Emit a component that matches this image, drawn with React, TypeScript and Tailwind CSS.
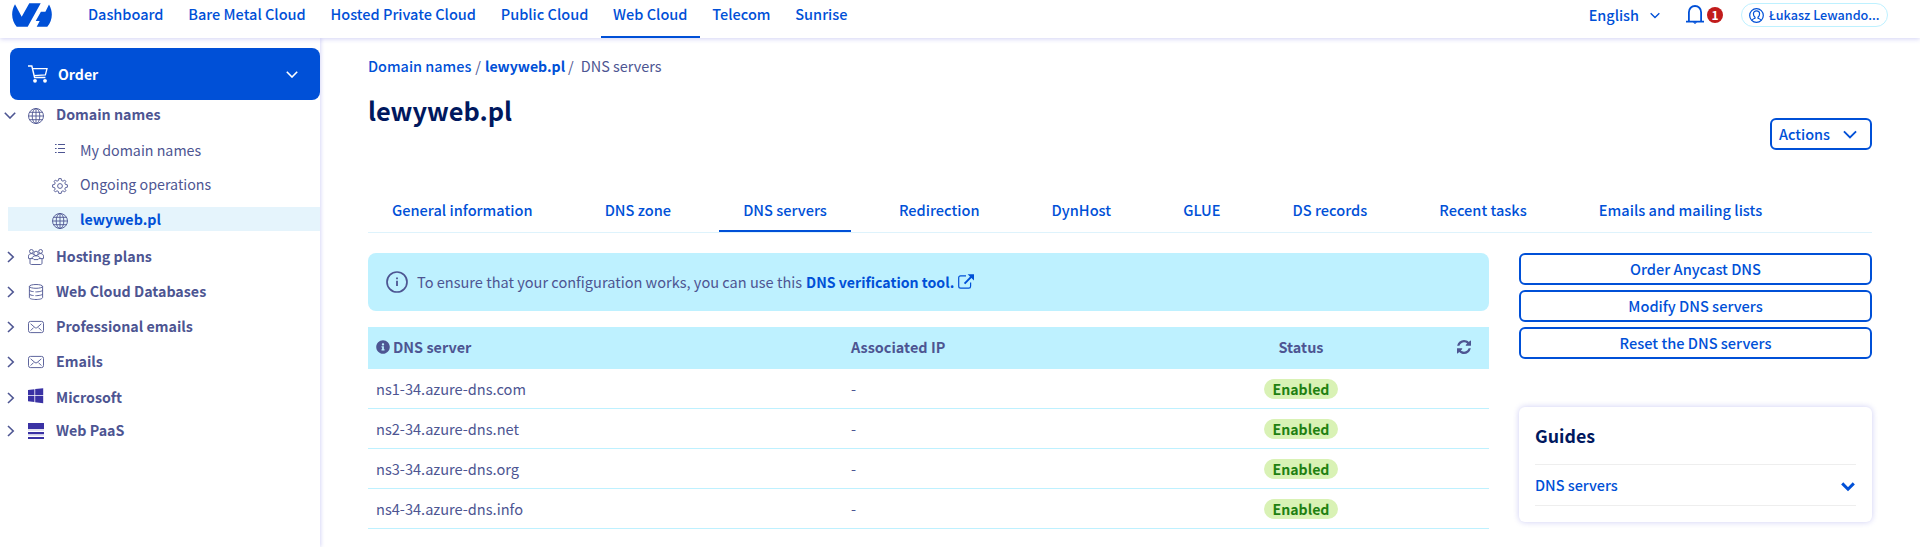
import type { ReactNode } from "react";
import { FaInfoCircle } from "react-icons/fa";

type IconProps = { className?: string };

function Chevron({ className = "" }: IconProps) {
  return (
    <svg viewBox="0 0 12 7" fill="none" stroke="currentColor" className={className}>
      <path d="M0.8 0.8 6 6 11.2 0.8" strokeWidth="1.6" />
    </svg>
  );
}

function ChevronRight() {
  return (
    <svg viewBox="0 0 8 12" fill="none" stroke="currentColor" className="h-3 w-2">
      <path d="M1 1 6.2 6 1 11" strokeWidth="1.6" />
    </svg>
  );
}

function Logo() {
  return (
    <svg viewBox="0 0 40 24" className="h-6 w-10 shrink-0" fill="#0050d7">
      <path d="M3 1.2 9.7 13.7 17.3.3H28.7L15.7 23.7H4.7C-.6 17.6-1.4 8.6 3 1.2Z" />
      <path d="M37 1.4C41.3 8.6 40.7 17.6 35.3 23.7H24.7L27.7 18H23.7L28.9 8.7H33.4Z" />
    </svg>
  );
}

function Cart() {
  return (
    <svg viewBox="0 0 20 18" fill="none" stroke="white" className="h-[18px] w-5">
      <path d="M0 .9H3.8L6.6 12.6H17.4" strokeWidth="1.5" />
      <path d="M4.6 3.6H19L17.4 9.8 6 10.6" strokeWidth="1.3" />
      <circle cx="7" cy="15.8" r="1.9" fill="white" stroke="none" />
      <circle cx="17" cy="15.8" r="1.9" fill="white" stroke="none" />
    </svg>
  );
}

function Globe() {
  return (
    <svg viewBox="0 0 16 16" fill="none" stroke="currentColor" strokeWidth="0.9" className="size-4">
      <circle cx="8" cy="8" r="7.5" />
      <ellipse cx="8" cy="8" rx="3.8" ry="7.5" />
      <path d="M8 .5V15.5M.5 8H15.5M1.6 4.3H14.4M1.6 11.7H14.4" />
    </svg>
  );
}

function ListIcon() {
  return (
    <svg viewBox="0 0 16 16" stroke="currentColor" strokeWidth="1.2" className="size-4">
      <path d="M3 3.5H4.6M3 7.5H4.6M3 11.5H4.6M6 3.5H13M6 7.5H13M6 11.5H13" />
    </svg>
  );
}

function Gear() {
  return (
    <svg viewBox="0 0 16 16" fill="none" stroke="currentColor" strokeWidth="0.9" strokeLinejoin="round" className="size-4">
      <path d="M6.8.6H9.2L9.6 2.6 11 3.2 12.7 2.1 13.9 3.3 12.8 5 13.4 6.4 15.4 6.8V9.2L13.4 9.6 12.8 11 13.9 12.7 12.7 13.9 11 12.8 9.6 13.4 9.2 15.4H6.8L6.4 13.4 5 12.8 3.3 13.9 2.1 12.7 3.2 11 2.6 9.6.6 9.2V6.8L2.6 6.4 3.2 5 2.1 3.3 3.3 2.1 5 3.2 6.4 2.6Z" />
      <circle cx="8" cy="8" r="2.4" />
    </svg>
  );
}

function Hosting() {
  return (
    <svg viewBox="0 0 16 16" fill="none" stroke="currentColor" strokeWidth="0.9" className="size-4">
      <circle cx="3.4" cy="2.4" r="1.9" />
      <circle cx="12.6" cy="2.4" r="1.9" />
      <circle cx="8" cy="4.4" r="2.2" />
      <path d="M.5 9.4V7.2C.5 5.6 1.8 4.6 3.6 4.6 4.6 4.6 5.4 5 5.8 5.6M15.5 9.4V7.2C15.5 5.6 14.2 4.6 12.4 4.6 11.4 4.6 10.6 5 10.2 5.6M4 9.4C4 7.8 5.6 6.8 8 6.8S12 7.8 12 9.4M.5 9.6H5.2L6 10.6H10L10.8 9.6H15.5M2 9.8V14C2 15 2.6 15.5 3.4 15.5H12.6C13.4 15.5 14 15 14 14V9.8" />
    </svg>
  );
}

function Database() {
  return (
    <svg viewBox="0 0 16 16" fill="none" stroke="currentColor" strokeWidth="0.9" className="size-4">
      <ellipse cx="8" cy="2.4" rx="6.6" ry="1.9" />
      <path d="M1.4 2.4V13.6C1.4 14.7 4.3 15.5 8 15.5S14.6 14.7 14.6 13.6V2.4M1.4 6.2C1.6 7 4 7.6 5.6 7.6M7.4 7.9C11 7.9 14.4 7.2 14.6 6.2M1.4 10C1.6 10.9 4 11.5 5.6 11.5M7.4 11.7C11 11.7 14.4 11 14.6 10" />
    </svg>
  );
}

function Mail() {
  return (
    <svg viewBox="0 0 16 16" fill="none" stroke="currentColor" strokeWidth="0.9" className="size-4">
      <rect x=".5" y="2.4" width="15" height="11.2" rx="2" />
      <path d="M2.6 4.8 7 8.6C7.6 9.1 8.4 9.1 9 8.6L13.4 4.8M2.6 11.6 5.6 8.6M13.4 11.6 10.4 8.6" />
    </svg>
  );
}

function Windows() {
  return (
    <svg viewBox="0 0 16 16" fill="#3a32a4" className="mb-[5px] size-4">
      <path d="M0 2 6.4 1.2V7.2H0ZM7.2 1.1 15.2.3V7.2H7.2ZM0 8H6.4V14L0 13.2ZM7.2 8H15.2V15.2L7.2 14.2Z" />
    </svg>
  );
}

function Paas() {
  return (
    <svg viewBox="0 0 16 16" className="size-4">
      <path d="M0 0H16V6H0ZM0 9H16V11.2H0ZM0 14H16V16H0Z" fill="#3a32a4" />
      <path d="M0 6.4H16V7.4H0ZM0 12.4H16V13H0Z" fill="#c5c3e4" />
    </svg>
  );
}

function Bell() {
  return (
    <svg viewBox="0 0 18 19" fill="none" stroke="#0050d7" strokeWidth="1.8" className="h-[19px] w-[18px]">
      <path d="M0 16.6H18M2.9 16.4V7.2C2.9 3.6 5.6 1 9 1S15.1 3.6 15.1 7.2V16.4" />
      <path d="M6.8 17.2 9 19 11.2 17.2Z" fill="#0050d7" stroke="none" />
    </svg>
  );
}

function UserIcon() {
  return (
    <svg viewBox="0 0 15 15" fill="none" stroke="#0050d7" strokeWidth="1.2" className="size-[15px] shrink-0">
      <circle cx="7.5" cy="7.5" r="6.8" />
      <path d="M3.2 12.2C3.6 10.9 5 10.7 6 10.2V9.2C5 8.4 4.4 7 4.4 5.8 4.4 3.9 5.7 2.9 7.5 2.9S10.6 3.9 10.6 5.8C10.6 7 10 8.4 9 9.2V10.2C10 10.7 11.4 10.9 11.8 12.2" />
    </svg>
  );
}

function ExternalLink() {
  return (
    <svg viewBox="0 0 16 15" fill="none" stroke="currentColor" className="mb-0.5 h-[15px] w-4">
      <path d="M8 1.9H2.6C1.4 1.9.7 2.6.7 3.8V12.2C.7 13.4 1.4 14.1 2.6 14.1H10.8C12 14.1 12.6 13.4 12.6 12.2V8.4" strokeWidth="1.2" />
      <path d="M6.6 9.6 13.4 2.6" strokeWidth="2" />
      <path d="M9.6.2H16V6.4Z" fill="currentColor" stroke="none" />
    </svg>
  );
}

function Refresh() {
  return (
    <svg viewBox="0 0 1536 1536" fill="currentColor" className="size-[14px]">
      <path d="M1511 928q0 5-1 7-64 268-268 434.500T764 1536q-146 0-282.500-55T238 1324l-129 129q-19 19-45 19t-45-19-19-45V960q0-26 19-45t45-19h448q26 0 45 19t19 45-19 45l-137 137q71 66 161 102t187 36q134 0 250-65t186-179q11-17 53-117 8-23 30-23h192q13 0 22.500 9.500t9.500 22.500zm25-800v448q0 26-19 45t-45 19h-448q-26 0-45-19t-19-45 19-45l138-138Q969 256 768 256q-134 0-250 65T332 500q-11 17-53 117-8 23-30 23H50q-13 0-22.500-9.500T18 608v-7q65-268 270-434.500T768 0q146 0 284 55.500T1297 212l130-129q19-19 45-19t45 19 19 45z" />
    </svg>
  );
}

const navItems = ["Dashboard", "Bare Metal Cloud", "Hosted Private Cloud", "Public Cloud", "Web Cloud", "Telecom", "Sunrise"];

function Header() {
  return (
    <header className="relative z-10 flex h-[38px] shrink-0 items-start bg-white pl-3 pr-8 shadow-[0_1px_5px_rgba(0,0,200,0.18)]">
      <div className="pt-[3px]">
        <Logo />
      </div>
      <nav className="ml-[23.5px] flex text-[14.52px]">
        {navItems.map((n) => (
          <a
            key={n}
            className={
              n === "Web Cloud"
                ? "h-[38px] border-b-2 border-[#0050d7] px-[12.4px] leading-[28px] text-[#0050d7]"
                : "h-[38px] px-[12.4px] leading-[28px] text-[#0050d7]"
            }
          >
            {n}
          </a>
        ))}
      </nav>
      <div className="ml-auto flex items-start text-[#0050d7]">
        <span className="leading-[29px]">English</span>
        <Chevron className="ml-[11px] mt-3 h-[7px] w-[10px]" />
        <span className="ml-[26px] mt-[5px]">
          <Bell />
        </span>
        <span className="ml-[3px] mt-[7px] flex size-4 items-center justify-center rounded-full bg-[#c11b1b] text-[12px] leading-4 font-bold text-white">
          1
        </span>
        <span className="ml-[18px] mt-[3px] flex h-6 w-[147px] items-center rounded-full border border-[#bef1ff] pl-[7px]">
          <UserIcon />
          <span className="ml-[5px] text-[12.65px] leading-5 whitespace-nowrap">Łukasz Lewando...</span>
        </span>
      </div>
    </header>
  );
}

function Section({ label, icon, className }: { label: string; icon: ReactNode; className: string }) {
  return (
    <div className={`flex items-center pl-[7px] font-bold ${className}`}>
      <ChevronRight />
      <span className="ml-[13px]">{icon}</span>
      <span className="mb-0.5 ml-3 leading-5">{label}</span>
    </div>
  );
}

function Sidebar() {
  return (
    <aside className="flex w-80 shrink-0 flex-col pt-2.5 text-[14.25px] text-[#4d5592] shadow-[1px_0_4px_rgba(0,0,200,0.16)]">
      <button className="ml-2.5 flex h-[52px] shrink-0 items-center rounded-lg bg-[#0050d7] pl-[18px] pr-[22px] text-[14.1px] font-bold text-white">
        <Cart />
        <span className="ml-2.5 mt-0.5">Order</span>
        <Chevron className="ml-auto h-[7px] w-3" />
      </button>
      <div className="flex h-8 items-center pl-1 font-bold">
        <Chevron className="mb-0.5 h-[7px] w-3" />
        <span className="ml-3">
          <Globe />
        </span>
        <span className="mb-1 ml-3 leading-5">Domain names</span>
      </div>
      <div className="mt-1 flex h-7 items-center pl-[52px] font-normal">
        <span className="-mt-[2px]">
          <ListIcon />
        </span>
        <span className="ml-3 leading-5">My domain names</span>
      </div>
      <div className="mt-[9px] flex h-6 items-center pl-[52px] font-normal">
        <span className="mt-[2px]">
          <Gear />
        </span>
        <span className="mb-0.5 ml-3 leading-5">Ongoing operations</span>
      </div>
      <div className="ml-2 mt-[10px] flex h-6 items-center bg-[#e5f4fc] pl-11 font-bold">
        <span className="mt-[3px]">
          <Globe />
        </span>
        <span className="ml-3 leading-5 text-[#0050d7]">lewyweb.pl</span>
      </div>
      <Section className="mt-[14px] h-6" label="Hosting plans" icon={<Hosting />} />
      <Section className="mt-[11px] h-6" label="Web Cloud Databases" icon={<Database />} />
      <Section className="mt-[11px] h-6" label="Professional emails" icon={<Mail />} />
      <Section className="mt-[11px] h-6" label="Emails" icon={<Mail />} />
      <Section className="mt-3 h-6" label="Microsoft" icon={<Windows />} />
      <Section className="mt-[9px] h-6" label="Web PaaS" icon={<Paas />} />
    </aside>
  );
}

const tabs = [
  "General information",
  "DNS zone",
  "DNS servers",
  "Redirection",
  "DynHost",
  "GLUE",
  "DS records",
  "Recent tasks",
  "Emails and mailing lists",
];

const servers = ["ns1-34.azure-dns.com", "ns2-34.azure-dns.net", "ns3-34.azure-dns.org", "ns4-34.azure-dns.info"];

function ActionButton({ children }: { children: ReactNode }) {
  return (
    <button className="flex h-8 items-center justify-center rounded-md border-2 border-[#0050d7] bg-white text-[14.6px] leading-5 text-[#0050d7]">
      {children}
    </button>
  );
}

function ServerTable() {
  return (
    <div className="mt-4 text-[#4d5592]">
      <div className="flex h-[42px] items-center bg-[#bef1ff] pb-0.5 pl-2 pr-[18px] font-bold">
        <FaInfoCircle className="size-[14px]" />
        <span className="ml-[3px] w-[458px]">DNS server</span>
        <span className="w-[350px]">Associated IP</span>
        <span className="w-[200px] text-center">Status</span>
        <span className="ml-auto">
          <Refresh />
        </span>
      </div>
      {servers.map((s) => (
        <div key={s} className="flex h-10 items-center border-b border-[#bef1ff] pl-2 text-[14.6px] font-normal">
          <span className="w-[475px]">{s}</span>
          <span className="w-[350px]">-</span>
          <span className="flex w-[200px] justify-center">
            <span className="h-5 rounded-full bg-[#d9f2b5] px-[9px] text-[14.1px] leading-5 font-bold text-[#1f8011]">Enabled</span>
          </span>
        </div>
      ))}
    </div>
  );
}

function Guides() {
  return (
    <div className="mt-12 h-[115px] rounded-md bg-white px-4 shadow-[0_0_6px_rgba(0,0,200,0.2)]">
      <h2 className="h-[58px] border-b border-[#eeeeee] pt-3.5 text-[17.8px] leading-7 font-bold text-[#00185e]">Guides</h2>
      <div className="flex h-[41px] items-center border-b border-[#eeeeee] text-[#0050d7]">
        <span>DNS servers</span>
        <svg viewBox="0 0 14 10" fill="none" stroke="currentColor" className="ml-auto mr-px mt-1 h-2.5 w-3.5">
          <path d="M1.2 1.4 7 7.2 12.8 1.4" strokeWidth="3" />
        </svg>
      </div>
    </div>
  );
}

export default function App() {
  return (
    <div className="flex h-[547px] flex-col overflow-hidden bg-white font-['Noto_Sans_CJK_SC','Noto_Sans',sans-serif] text-[14.45px] font-medium">
      <Header />
      <div className="flex min-h-0 flex-1">
        <Sidebar />
        <main className="flex min-w-0 flex-1 flex-col pl-12 pr-12">
          <div className="mt-[18px] flex h-5 items-center whitespace-pre leading-5 text-[#0050d7]">
            <span>Domain names</span>
            <span className="mx-[4px] font-normal text-[#4d5592]">/</span>
            <span className="font-bold text-[14.1px]">lewyweb.pl</span>
            <span className="ml-[3px] mr-[7px] font-normal text-[#4d5592]">/</span>
            <span className="font-normal text-[#4d5592]">DNS servers</span>
          </div>
          <h1 className="mt-[14px] h-[28px] text-[25.35px] leading-[40px] font-bold text-[#00185e]">lewyweb.pl</h1>
          <div className="flex justify-end">
            <button className="flex h-8 w-[102px] items-center rounded-md border-2 border-[#0050d7] pl-[7px] pr-[13px] text-[#0050d7]">
              <span>Actions</span>
              <Chevron className="ml-auto h-[9px] w-[14px]" />
            </button>
          </div>
          <div className="mt-[41px] flex h-[42px] gap-[24.1px] border-b border-[#def3fc] text-[14.6px] text-[#0050d7]">
            {tabs.map((t) => (
              <a
                key={t}
                className={
                  t === "DNS servers"
                    ? "h-[41px] border-b-2 border-[#0050d7] px-6 leading-[37px]"
                    : "h-[41px] px-6 leading-[37px]"
                }
              >
                {t}
              </a>
            ))}
          </div>
          <div className="mt-5 flex gap-[30px]">
            <div className="w-[1121px]">
              <div className="flex h-[58px] items-center rounded-lg bg-[#bef1ff] pl-[18px] text-[#4d5592]">
                <svg viewBox="0 0 22 22" fill="none" stroke="currentColor" className="size-[22px]">
                  <circle cx="11" cy="11" r="10" strokeWidth="1.7" />
                  <path d="M11 9.8V15M11 6.6V8.2" strokeWidth="1.8" />
                </svg>
                <span className="ml-[9px] text-[14.57px] font-normal">To ensure that your configuration works, you can use this</span>
                <a className="ml-1 flex items-center gap-1 pt-0.5 text-[14.15px] font-bold text-[#0050d7]">
                  DNS verification tool. <ExternalLink />
                </a>
              </div>
              <ServerTable />
            </div>
            <div className="flex w-[353px] flex-col">
              <div className="flex flex-col gap-[5px]">
                <ActionButton>Order Anycast DNS</ActionButton>
                <ActionButton>Modify DNS servers</ActionButton>
                <ActionButton>Reset the DNS servers</ActionButton>
              </div>
              <Guides />
            </div>
          </div>
        </main>
      </div>
    </div>
  );
}
